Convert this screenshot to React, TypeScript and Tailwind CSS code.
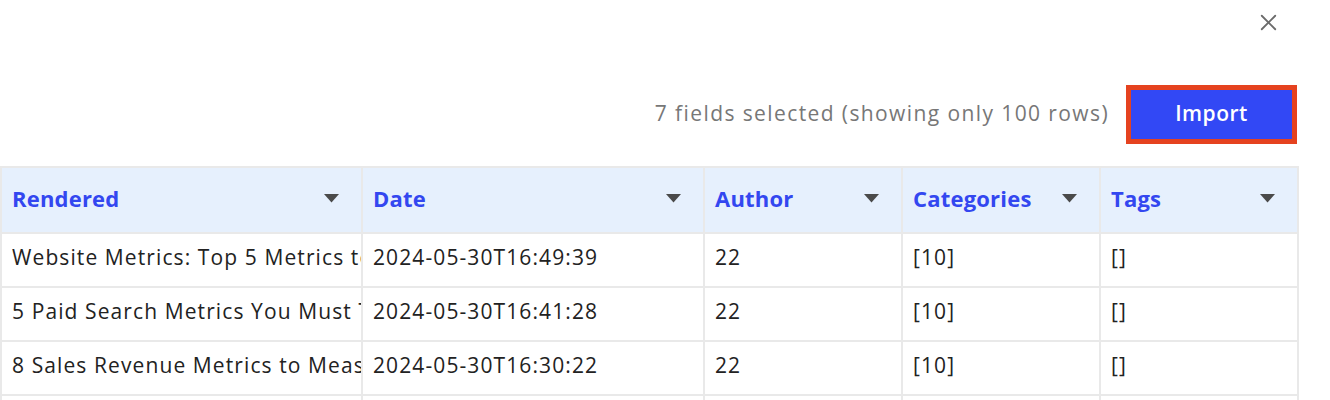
import { X } from 'lucide-react';

const columns = [
  { key: 'rendered', label: 'Rendered', width: 'w-[361px]' },
  { key: 'date', label: 'Date', width: 'w-[342px]' },
  { key: 'author', label: 'Author', width: 'w-[198px]' },
  { key: 'categories', label: 'Categories', width: 'w-[198px]' },
  { key: 'tags', label: 'Tags', width: 'w-[198px]' },
];

const rows = [
  ['Website Metrics: Top 5 Metrics to Track', '2024-05-30T16:49:39', '22', '[10]', '[]'],
  ['5 Paid Search Metrics You Must Track', '2024-05-30T16:41:28', '22', '[10]', '[]'],
  ['8 Sales Revenue Metrics to Measure', '2024-05-30T16:30:22', '22', '[10]', '[]'],
  ['Top Marketing KPIs for Agencies', '2024-05-30T16:20:10', '22', '[10]', '[]'],
];

function Caret() {
  return (
    <svg width="15" height="9" viewBox="0 0 15 9" className="shrink-0">
      <path d="M0 0 H15 L7.5 8.5 Z" fill="#4a4a4a" />
    </svg>
  );
}

export default function App() {
  return (
    <main className="h-[400px] w-[1330px] overflow-hidden bg-white font-['Open_Sans','Liberation_Sans',sans-serif]">
      <div className="flex justify-end pr-[48px] pt-[9px]">
        <button className="text-[#6b6b6b]">
          <X size={27} strokeWidth={1.6} />
        </button>
      </div>

      <div className="mt-[49px] flex items-center justify-end gap-[17px] pr-[33px]">
        <span className="pb-[2px] text-[21px] tracking-[1.4px] text-[#777]">
          7 fields selected (showing only 100 rows)
        </span>
        <button className="h-[59px] w-[171px] border-[5px] border-[#e5421f] bg-[#3248f5] pb-[2px] text-[21px] font-semibold tracking-[0.5px] text-white">
          Import
        </button>
      </div>

      <div className="mt-[22px]">
        <table className="w-[1297px] table-fixed border-collapse">
          <thead>
            <tr className="bg-[#e6f0fd]">
              {columns.map((c) => (
                <th
                  key={c.key}
                  className={`${c.width} h-[66px] border-2 border-[#e9e9e9] px-[10px] pb-[3px] text-left text-[22px] font-bold tracking-[0.2px] text-[#3347f0]`}
                >
                  <div className="flex items-center justify-between pr-[12px]">
                    <span>{c.label}</span>
                    <Caret />
                  </div>
                </th>
              ))}
            </tr>
          </thead>
          <tbody>
            {rows.map((r, i) => (
              <tr key={i}>
                {r.map((v, j) => (
                  <td
                    key={j}
                    className="h-[54px] border-2 border-[#e9e9e9] pb-[4px] pl-[10px] pr-0 text-[21px] tracking-[1.1px] text-[#222]"
                  >
                    <div className="overflow-hidden whitespace-nowrap">{v}</div>
                  </td>
                ))}
              </tr>
            ))}
          </tbody>
        </table>
      </div>
    </main>
  );
}
